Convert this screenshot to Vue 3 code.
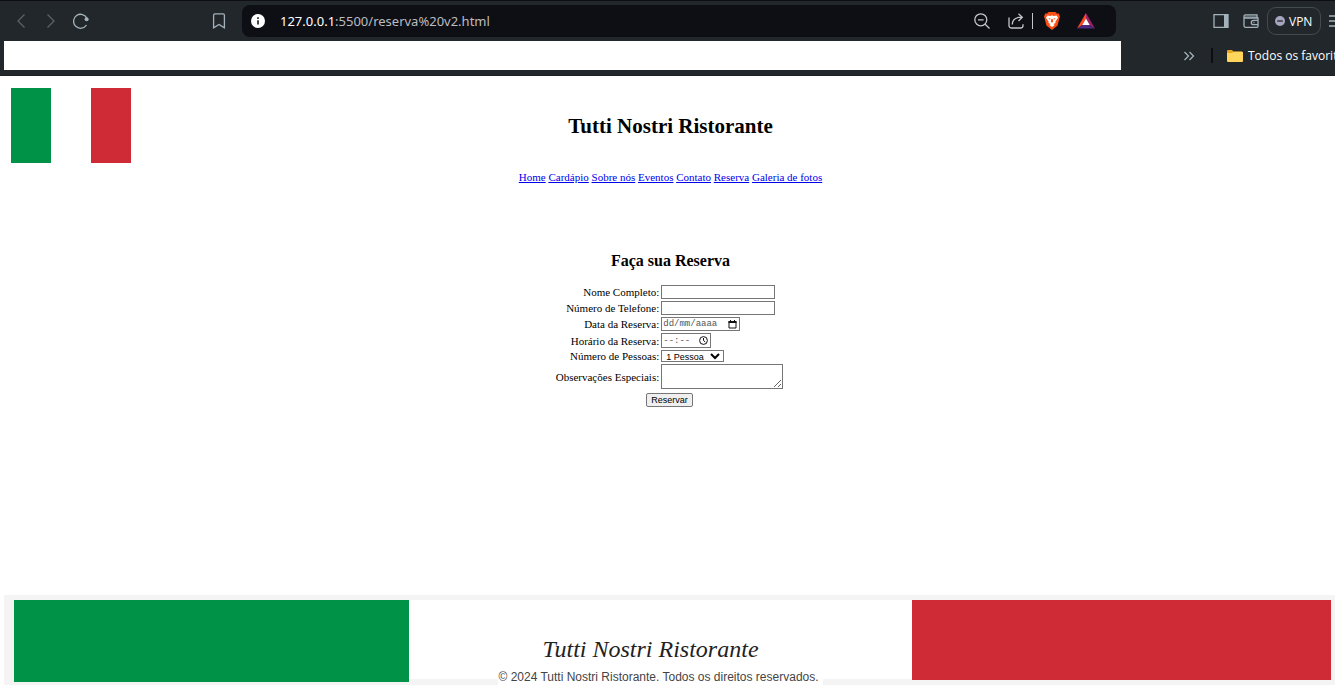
<script setup>
import { ref } from 'vue'

const links = ['Home', 'Cardápio', 'Sobre nós', 'Eventos', 'Contato', 'Reserva', 'Galeria de fotos']
const people = ['1 Pessoa', '2 Pessoas', '3 Pessoas', '4 Pessoas', '5 Pessoas']
const form = ref({ name: '', phone: '', date: '', time: '', people: '1 Pessoa', notes: '' })
</script>

<template>
  <div class="window">
    <header class="browser">
      <div class="toolbar">
        <div class="nav-buttons">
          <button class="icon dim" aria-label="Voltar">
            <svg viewBox="0 0 16 16"><path d="M11.500 1.500 5 8l6.500 6.500" /></svg>
          </button>
          <button class="icon dim" aria-label="Avançar">
            <svg viewBox="0 0 16 16"><path d="M4.500 1.500 11 8l-6.500 6.500" /></svg>
          </button>
          <button class="icon" aria-label="Recarregar">
            <svg viewBox="0 0 16 16"><path d="M14 5.500A7 7 0 1 0 13.500 12" /><circle cx="13.600" cy="6.300" r="2" fill="currentColor" stroke="none" /></svg>
          </button>
          <button class="icon bookmark" aria-label="Favoritar">
            <svg viewBox="0 0 16 16"><path d="M4 .8h8a1.400 1.400 0 0 1 1.400 1.400V14.800L8 11.500 2.600 14.800V2.200A1.400 1.400 0 0 1 4 .8z" /></svg>
          </button>
        </div>
        <div class="address">
          <svg class="info" viewBox="0 0 16 16"><circle cx="8" cy="8" r="7" fill="#fff" /><path d="M8 7.200v4.300M8 4.200v1.800" stroke="#333" stroke-width="1.800" /></svg>
          <span class="url"><span class="host">127.0.0.1</span>:5500/reserva%20v2.html</span>
          <button class="icon light" aria-label="Zoom">
            <svg viewBox="0 0 16 16"><circle cx="6.800" cy="6.800" r="6" /><path d="m11.200 11.200 4.300 4.300M4 6.800h5.600" /></svg>
          </button>
          <button class="icon light share" aria-label="Compartilhar">
            <svg viewBox="0 0 16 16"><path d="M1 4.500V12.500A2.500 2.500 0 0 0 3.500 15h9A2.500 2.500 0 0 0 15 12.500v-1.300M4.300 11.500C4.300 6.800 7.500 4.200 13.700 4.200M10.500.8l3.800 3.400-3.800 3.800" /></svg>
          </button>
          <span class="rule"></span>
          <button class="icon brand" aria-label="Brave Shields">
            <svg viewBox="0 0 16 18" stroke="none"><path fill="#fb4f14" d="M4.500 0h7l1.300 1.500 2-.1L16 4.500l-.6 1.700-1.800 7.300L8 18l-5.600-4.500L.6 6.200 0 4.500l1.200-3.100 2 .1z" /><path fill="#fff" d="m3.500 3.500 3 .4L8 3.300l1.500.6 3-.4L14 5.700l-2.700 4 .3 1.400-2.300 1L10.700 13 8 15l-2.700-2 1.400-.9-2.300-1 .3-1.400-2.700-4z" /><path fill="#fb4f14" d="m4.200 6 2.500.7-.8 1zM11.800 6l-2.500.7.8 1zM7.300 7h1.400l.5 2.700L8 10.700 6.800 9.700z" /></svg>
          </button>
          <button class="icon bat" aria-label="Brave Rewards">
            <svg viewBox="0 0 18 16" stroke="none"><path fill="#ff4724" d="M9 0v5.500L5.500 12 0 15.500z" /><path fill="#9e1f63" d="m9 0 9 15.500-5.500-3.500L9 5.500z" /><path fill="#4d2980" d="M0 15.500 5.500 12h7l5.500 3.500z" /><path fill="#fff" d="m9 5.500 3.700 6.500H5.300z" /></svg>
          </button>
        </div>
        <div class="actions">
          <button class="icon" aria-label="Painel lateral">
            <svg viewBox="0 0 16 16"><path d="M1 1.700h14v12.600H1z" /><path d="M11 1.500h4v13h-4z" fill="currentColor" stroke="none" /></svg>
          </button>
          <button class="icon wallet" aria-label="Carteira">
            <svg viewBox="0 0 16 16"><path d="M1 3.300v9.500A1.500 1.500 0 0 0 2.500 14.300H14a1 1 0 0 0 1-1V5H2.500A1.500 1.500 0 0 1 1 3.300 1.500 1.500 0 0 1 2.500 1.800H14V5M15 7.300h-4.500a2.200 2.200 0 0 0 0 4.400H15M10.500 9.500h1" /><path d="M2 2.500h12V5H2z" fill="currentColor" opacity=".45" stroke="none" /></svg>
          </button>
          <button class="vpn">
            <svg viewBox="0 0 10 10"><circle cx="5" cy="5" r="5" fill="#a5a5bd" /><path d="M2.200 5h5.600" stroke="#22272b" stroke-width="1.300" /></svg>
            VPN
          </button>
          <button class="icon menu" aria-label="Menu">
            <svg viewBox="0 0 16 16"><path d="M0 3h16M0 8h16M0 13h16" /></svg>
          </button>
        </div>
      </div>
      <div class="favorites">
        <div class="shortcuts"></div>
        <div class="more">
          <button class="icon chevrons" aria-label="Mais favoritos">
            <svg viewBox="0 0 12 12"><path d="m1.500 2 4 4-4 4M6.500 2l4 4-4 4" /></svg>
          </button>
          <span class="split"></span>
          <button class="folder">
            <svg viewBox="0 0 16 14"><path fill="#e8a520" d="M0 2Q0 1 1 1h4l1.500 1.500H15V6H0z" /><path fill="#ffd55c" d="M0 4h5l1.500-1.200H15q1 0 1 1V12q0 1-1 1H1q-1 0-1-1z" /></svg>
            Todos os favoritos
          </button>
        </div>
      </div>
    </header>

    <div class="page">
      <div class="flag"><span class="green"></span><span class="red"></span></div>
      <h1>Tutti Nostri Ristorante</h1>
      <nav>
        <template v-for="link in links" :key="link"><a href="#">{{ link }}</a>{{ ' ' }}</template>
      </nav>
      <main>
        <h2>Faça sua Reserva</h2>
        <form @submit.prevent>
          <label for="name">Nome Completo:</label>
          <input id="name" v-model="form.name" class="wide" type="text">
          <label for="phone">Número de Telefone:</label>
          <input id="phone" v-model="form.phone" class="wide" type="tel">
          <label for="date">Data da Reserva:</label>
          <div class="picker date">
            <input id="date" v-model="form.date" type="text" placeholder="dd/mm/aaaa">
            <svg viewBox="0 0 9 9"><path d="M1 1.500h7V8H1z" fill="none" stroke="#111" /><path d="M.5 1h8v2h-8zM2 0h1v1H2zM6 0h1v1H6z" fill="#111" /></svg>
          </div>
          <label for="time">Horário da Reserva:</label>
          <div class="picker time">
            <input id="time" v-model="form.time" type="text" placeholder="--:--">
            <svg viewBox="0 0 9 9"><path d="M4.500 2v2.500L6.300 6" fill="none" stroke="#111" /><circle cx="4.500" cy="4.500" r="3.900" fill="none" stroke="#111" /></svg>
          </div>
          <label for="people">Número de Pessoas:</label>
          <select id="people" v-model="form.people">
            <option v-for="p in people" :key="p">{{ p }}</option>
          </select>
          <label for="notes">Observações Especiais:</label>
          <textarea id="notes" v-model="form.notes"></textarea>
          <button class="submit" type="submit">Reservar</button>
        </form>
      </main>
      <footer>
        <div class="green"></div>
        <div class="credits">
          <p class="signature">Tutti Nostri Ristorante</p>
          <p class="copyright">© 2024 Tutti Nostri Ristorante. Todos os direitos reservados.</p>
        </div>
        <div class="red"></div>
      </footer>
    </div>
  </div>
</template>

<style>
body {
  overflow: hidden;
  background: #fff;
}
</style>

<style scoped>
* {
  box-sizing: border-box;
}
.window {
  display: flex;
  flex-direction: column;
  min-height: 100vh;
}
button {
  font: inherit;
  color: inherit;
}
.browser {
  flex: none;
  background: #22272b;
  border-top: 1px solid #0e0f15;
  border-bottom: 1px solid #1d1e26;
  padding: 4px 0 5px;
  font-family: "Open Sans", "Noto Sans", sans-serif;
  font-size: 12px;
  color: #fff;
}
.toolbar,
.nav-buttons,
.address,
.actions,
.favorites,
.more,
.folder,
.vpn {
  display: flex;
  align-items: center;
}
.icon {
  flex: none;
  width: 16px;
  height: 16px;
  padding: 0;
  border: 0;
  background: none;
  color: #a3b2ba;
}
.icon svg {
  display: block;
  width: 100%;
  height: 100%;
  fill: none;
  stroke: currentColor;
  stroke-width: 1.3;
}
.icon svg [stroke="none"],
.icon svg[stroke="none"] {
  stroke: none;
}
.icon.dim {
  color: #58626a;
}
.icon.light {
  color: #c4c5c9;
}
.toolbar {
  height: 32px;
}
.nav-buttons {
  flex: none;
  width: 242px;
  padding: 0 15px 0 13px;
  gap: 14px;
}
.bookmark {
  margin-left: auto;
}
.address {
  flex: 1;
  height: 32px;
  padding: 0 21px 0 8px;
  border-radius: 8px;
  background: #0e0f15;
}
.info {
  width: 16px;
  height: 16px;
}
.url {
  flex: 1;
  margin-left: 14px;
  font-family: "Noto Sans", sans-serif;
  font-size: 13px;
  color: #bbbcc0;
}
.host {
  color: #fff;
}
.share {
  margin-left: 18px;
}
.rule {
  width: 1px;
  height: 16px;
  margin: 0 11px 0 8px;
  background: #c4c5c9;
}
.brand {
  height: 18px;
}
.bat {
  width: 18px;
  margin-left: 17px;
}
.actions {
  flex: none;
  width: 219px;
  padding-left: 97px;
  overflow: hidden;
}
.wallet {
  margin-left: 14px;
}
.vpn {
  flex: none;
  width: 54px;
  height: 28px;
  margin: 0 8px;
  padding: 0 0 0 7px;
  gap: 4px;
  border: 1px solid #434b51;
  border-radius: 9px;
  background: none;
}
.vpn svg {
  width: 10px;
  height: 10px;
}
.favorites {
  height: 29px;
  margin-top: 4px;
  padding-left: 4px;
}
.shortcuts {
  flex: 1;
  height: 29px;
  background: #fff;
}
.more {
  flex: none;
  width: 214px;
  padding-left: 62px;
  overflow: hidden;
}
.chevrons {
  width: 12px;
  height: 12px;
}
.split {
  flex: none;
  width: 2px;
  height: 15px;
  margin: 0 14px 0 16px;
  background: #0e0f15;
}
.folder {
  flex: none;
  gap: 5px;
  padding: 0;
  border: 0;
  background: none;
  white-space: nowrap;
}
.folder svg {
  width: 16px;
  height: 14px;
}
.page {
  position: relative;
  flex: 1;
  display: flex;
  flex-direction: column;
  padding-left: 4px;
  font-family: "Liberation Serif", serif;
  font-size: 11px;
  color: #000;
  text-align: center;
}
.green {
  background: #009246;
}
.red {
  background: #ce2b37;
}
.flag {
  position: absolute;
  top: 12px;
  left: 11px;
  display: flex;
  justify-content: space-between;
  width: 120px;
  height: 75px;
}
.flag span {
  width: 40px;
}
h1,
h2,
nav {
  padding-left: 2px;
}
h1 {
  margin: 38px 0 0;
  font-size: 21px;
  line-height: 24px;
}
nav {
  margin-top: 33px;
  line-height: 12px;
}
nav a {
  color: #0000ee;
}
main {
  flex: 1;
  padding-bottom: 40px;
}
h2 {
  margin: 68px 0 14px;
  font-size: 16px;
  line-height: 20px;
}
form {
  display: grid;
  grid-template-columns: auto auto;
  justify-content: center;
  justify-items: start;
  align-items: center;
  gap: 2px;
}
label {
  justify-self: end;
  line-height: 12px;
}
input,
select,
textarea,
.picker {
  margin: 0;
  padding: 0 2px;
  border: 1px solid #767676;
  background: #fff;
  color: #000;
  font-family: "Liberation Sans", sans-serif;
  font-size: 9px;
}
.wide {
  width: 114px;
  height: 14px;
}
.picker {
  display: flex;
  align-items: center;
  padding: 0 2px 0 1px;
}
.picker input {
  flex: 1;
  min-width: 0;
  height: 12px;
  padding: 0;
  border: 0;
  font-family: "Liberation Mono", monospace;
}
.picker input::placeholder {
  color: #555;
}
.picker svg {
  flex: none;
  width: 9px;
  height: 9px;
}
.date {
  width: 79px;
  height: 14px;
}
.time {
  width: 50px;
  height: 15px;
}
select {
  width: 63px;
  height: 12px;
  padding: 0;
  border-radius: 0;
}
textarea {
  display: block;
  width: 122px;
  height: 25px;
}
.submit {
  grid-column: 1 / -1;
  justify-self: center;
  height: 14px;
  margin-top: 2px;
  padding: 0 4px;
  border: 1px solid #767676;
  border-radius: 2px;
  background: #efefef;
  font-family: "Liberation Sans", sans-serif;
  font-size: 9px;
  line-height: 12px;
}
footer {
  display: flex;
  padding: 5px 4px 0 10px;
  background: #f4f4f4;
}
footer .green {
  flex: 395;
  margin-bottom: 3px;
}
footer .red {
  flex: 419;
  margin-bottom: 5px;
}
.credits {
  flex: 504;
  padding-top: 35px;
  background: linear-gradient(#fff, #fff) no-repeat 0 0 / 100% calc(100% - 6px);
}
.credits p {
  margin: 0;
}
.credits .signature {
  padding-right: 20px;
  font-family: "Segoe Script", "Bradley Hand", "Liberation Serif", cursive;
  font-size: 24px;
  font-style: italic;
  line-height: 28px;
  color: #222;
}
.credits .copyright {
  width: fit-content;
  margin: 7px auto 0;
  padding-right: 4px;
  background: #fff;
  font-family: "Liberation Sans", sans-serif;
  font-size: 12px;
  line-height: 15px;
  color: #444;
  white-space: nowrap;
}
</style>
